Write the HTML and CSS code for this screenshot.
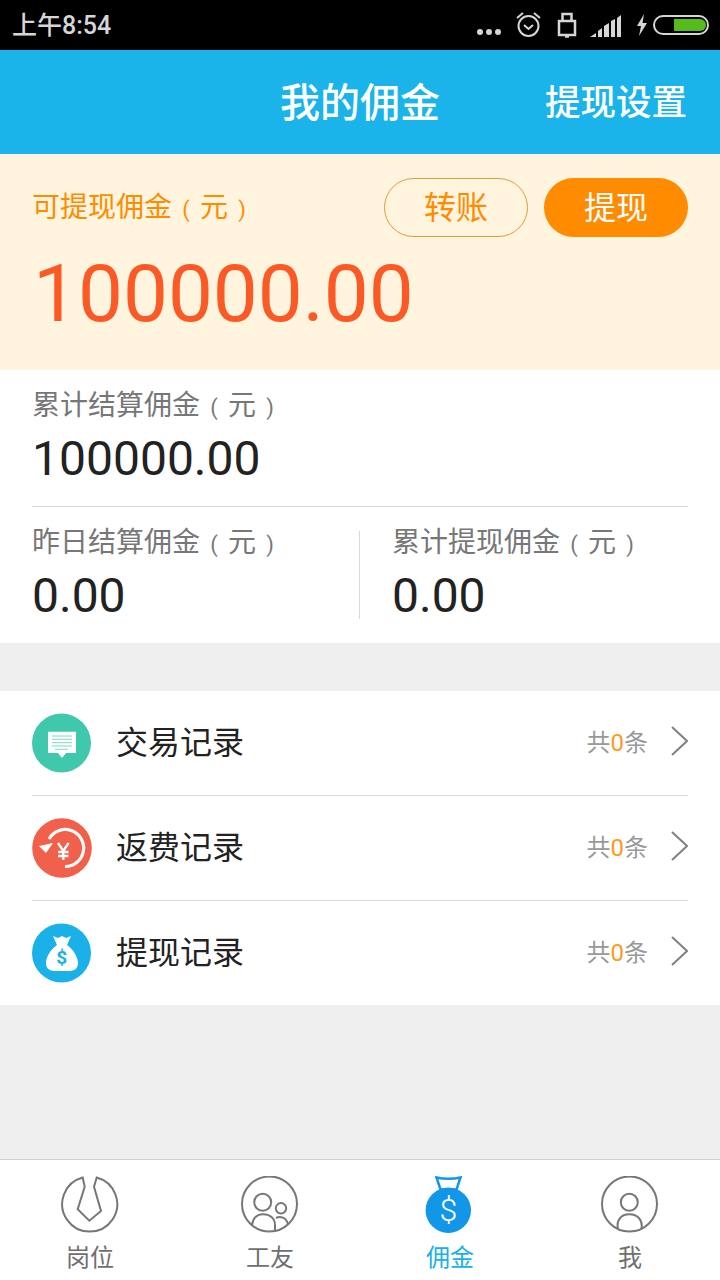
FILE: index.html
```html
<!DOCTYPE html>
<html lang="zh-CN">
<head>
<meta charset="utf-8">
<title>我的佣金</title>
<link rel="stylesheet" href="styles.css">
</head>
<body>
<div class="app">
  <div class="statusbar">
    <span class="clock">上午8:54</span>
    <div class="status-icons">
      <svg width="26" height="8" viewBox="0 0 26 8" class="ic-dots"><circle cx="4" cy="4" r="3"/><circle cx="13" cy="4" r="3"/><circle cx="22" cy="4" r="3"/></svg>
      <svg width="28" height="28" viewBox="0 0 28 28" class="ic-alarm"><circle cx="13.500" cy="15" r="10"/><path d="M9 14l4.500 4 4.500-4M2 7l6-5M25 7l-6-5"/></svg>
      <svg width="20" height="26" viewBox="0 0 20 26" class="ic-lock"><path d="M2 9h16v14H2zM5.500 9V2h9v7M8 24.500h4"/></svg>
      <svg width="32" height="22" viewBox="0 0 32 22" class="ic-signal"><path d="M0 22l6-4v4zM8 16l4-3v9H8zM14 11l5-3v14h-5zM21 6l4-2v18h-4zM27 3l4-3v22h-4z"/></svg>
      <svg width="12" height="22" viewBox="0 0 12 22" class="ic-bolt"><path d="M8 0L1 12h4l-2 10 8-13H6.500z"/></svg>
      <svg width="56" height="20" viewBox="0 0 56 20" class="ic-batt"><rect x="1" y="1" width="54" height="18" rx="9" class="batt-shell"/><path d="M21 4h26a6 6 0 0 1 0 12H21z" class="batt-level"/></svg>
    </div>
  </div>

  <header class="topbar">
    <h1 class="title">我的佣金</h1>
    <span class="action">提现设置</span>
  </header>

  <section class="balance">
    <div class="balance-top">
      <span class="balance-label">可提现佣金<span class="par">(</span>元<span class="par">)</span></span>
      <div class="btns">
        <span class="btn btn-outline">转账</span>
        <span class="btn btn-solid">提现</span>
      </div>
    </div>
    <div class="balance-value">100000.00</div>
  </section>

  <section class="stats">
    <div class="stat-main">
      <div class="stat-label">累计结算佣金<span class="par">(</span>元<span class="par">)</span></div>
      <div class="stat-value">100000.00</div>
    </div>
    <div class="stat-row">
      <div class="stat-col">
        <div class="stat-label">昨日结算佣金<span class="par">(</span>元<span class="par">)</span></div>
        <div class="stat-value">0.00</div>
      </div>
      <div class="stat-col stat-col-right">
        <div class="stat-label">累计提现佣金<span class="par">(</span>元<span class="par">)</span></div>
        <div class="stat-value">0.00</div>
      </div>
    </div>
  </section>

  <section class="records">
    <div class="record">
      <svg class="record-ic" width="60" height="60" viewBox="0 0 60 60"><circle cx="29.500" cy="30" r="29.500" fill="#3fc8ac"/><path d="M16 18.700h28V40H34l-4 5-4-5H16z" fill="#fff"/><path d="M20 23h20M20 26.300h20M20 29.700h20M20 33h20M23 36.300h13" stroke="#7fd9c6" stroke-width="1"/></svg>
      <span class="record-name">交易记录</span>
      <span class="record-count">共<b>0</b>条</span>
      <svg class="chev" width="20" height="32" viewBox="0 0 20 32"><path d="M4 2l15 14L4 30"/></svg>
    </div>
    <div class="record">
      <svg class="record-ic" width="60" height="60" viewBox="0 0 60 60"><circle cx="30" cy="30" r="29.800" fill="#f1604a"/><path d="M33 48.500A18.500 18.500 0 1 0 17 21" fill="none" stroke="#fff" stroke-width="3.200"/><path d="M7 28l14-3-7 10z" fill="#fff"/><path d="M26 25l5.300 8 5.300-8M31.300 33v9M26 34h10.500M26 38h10.500" fill="none" stroke="#fff" stroke-width="2.300"/></svg>
      <span class="record-name">返费记录</span>
      <span class="record-count">共<b>0</b>条</span>
      <svg class="chev" width="20" height="32" viewBox="0 0 20 32"><path d="M4 2l15 14L4 30"/></svg>
    </div>
    <div class="record">
      <svg class="record-ic" width="60" height="60" viewBox="0 0 60 60"><circle cx="29.500" cy="30" r="29.500" fill="#1ab0e8"/><path d="M21 13l5 2 4-2 4 2 5-2-4 9c6 4 11 12 11 18 0 6-4 8-9 8H23c-5 0-9-2-9-8 0-6 5-14 11-18z" fill="#fff"/><text x="29.700" y="41" class="bag-dollar">$</text></svg>
      <span class="record-name">提现记录</span>
      <span class="record-count">共<b>0</b>条</span>
      <svg class="chev" width="20" height="32" viewBox="0 0 20 32"><path d="M4 2l15 14L4 30"/></svg>
    </div>
  </section>

  <div class="filler"></div>

  <nav class="tabbar">
    <div class="tab">
      <svg width="58" height="58" viewBox="0 0 58 58" class="tab-ic"><path d="M21.700 1.500L23.700 10.700 16.700 33.300 28.300 44.700 40 35 33 10.700 35.700 1.500A27.500 27.500 0 1 1 21.700 1.500z"/></svg>
      <span>岗位</span>
    </div>
    <div class="tab">
      <svg width="58" height="58" viewBox="0 0 58 58" class="tab-ic"><circle cx="28.500" cy="28" r="27.500"/><circle cx="21.700" cy="26.300" r="8.500"/><circle cx="40" cy="32.300" r="5.200"/><path d="M11 49c1-7 5-10.700 11.300-10.700S34 42 34 49v6.500M35 42c4-2 10-1 12 6"/></svg>
      <span>工友</span>
    </div>
    <div class="tab tab-active">
      <svg width="58" height="58" viewBox="0 0 58 58" class="tab-money"><path d="M15.500 1.500q12 2.500 24 0l-4 12H19.500z" fill="none" stroke="#1296e8" stroke-width="2.500"/><circle cx="27.300" cy="34.200" r="22.700" fill="#1296e8"/><text x="27.300" y="45" class="tab-dollar">$</text></svg>
      <span>佣金</span>
    </div>
    <div class="tab">
      <svg width="58" height="58" viewBox="0 0 58 58" class="tab-ic"><circle cx="28.500" cy="28" r="27.500"/><circle cx="28.300" cy="26.300" r="8.500"/><path d="M17 53C15 44 20 38.300 28.300 38.300S42 44 40.500 53"/></svg>
      <span>我</span>
    </div>
  </nav>
</div>
</body>
</html>
```

FILE: styles.css
```css
* { box-sizing: border-box; margin: 0; padding: 0; }
html, body { width: 720px; height: 1280px; overflow: hidden; }
body { font-family: Roboto, "Noto Sans CJK SC", sans-serif; background: #efefef; }
.app { width: 720px; height: 1280px; display: flex; flex-direction: column; }

.statusbar { height: 50px; background: #000; display: flex; align-items: center; justify-content: space-between; padding: 0 11px 0 12px; flex: none; }
.clock { color: #d6d6d6; font-size: 25px; font-weight: 500; line-height: 50px; padding-top: 1px; }
.status-icons { display: flex; align-items: center; gap: 14px; }
.ic-dots { fill: #d6d6d6; margin-top: 14px; }
.ic-alarm { fill: none; stroke: #d6d6d6; stroke-width: 2; margin-left: -1px; }
.ic-lock { fill: none; stroke: #d6d6d6; stroke-width: 2.500; }
.ic-signal { fill: #d6d6d6; margin-top: 1px; margin-left: -1px; }
.ic-bolt { fill: #d6d6d6; }
.ic-batt { margin-left: -9px; }
.batt-shell { fill: none; stroke: #d6d6d6; stroke-width: 2; }
.batt-level { fill: #57bb1c; }

.topbar { height: 104px; background: #1ab3ea; position: relative; display: flex; align-items: center; justify-content: center; padding-bottom: 4px; flex: none; }
.title { color: #fff; font-size: 40px; font-weight: 500; }
.action { position: absolute; right: 33px; top: 30px; color: #fff; font-size: 35.500px; line-height: 46px; font-weight: 500; }

.balance { height: 216px; background: #fff5de; padding: 24px 32px 0; flex: none; }
.balance-top { display: flex; justify-content: space-between; align-items: center; }
.balance-label { color: #ff8b00; font-size: 28px; padding-bottom: 6px; }
.par { display: inline-block; width: 28px; text-align: center; font-size: 22px; font-weight: 400; line-height: 20px; }
.btns { display: flex; gap: 16px; }
.btn { width: 144px; height: 59px; border-radius: 30px; display: flex; align-items: center; justify-content: center; font-size: 32px; padding-bottom: 5px; }
.btn-outline { border: 1px solid #e09a40; color: #ff8b00; }
.btn-solid { background: #ff8b00; color: #fff; }
.balance-value { color: #fb5a27; font-size: 80px; line-height: 100px; margin-top: 7px; margin-left: 1px; }

.stats { height: 273px; background: #fff; padding: 0 32px; flex: none; }
.stat-main { height: 137px; border-bottom: 1px solid #d9d9d9; padding-top: 16px; }
.stat-label { color: #777; font-size: 28px; line-height: 40px; }
.stat-value { color: #222; font-size: 48px; line-height: 66px; }
.stat-row { display: flex; padding-top: 16px; }
.stat-col { flex: none; width: 327px; }
.stat-col-right { border-left: 1px solid #d9d9d9; height: 88px; margin-top: 8px; padding-left: 32px; }
.stat-col-right .stat-label { margin-top: -8px; }

.records { margin-top: 48px; height: 314px; background: #fff; padding: 0 32px; flex: none; display: flex; flex-direction: column; }
.record { flex: 1; display: flex; align-items: center; border-bottom: 1px solid #d9d9d9; }
.record:last-child { border-bottom: 0; }
.record-ic { flex: none; }
.bag-dollar { font-size: 19px; font-weight: 700; fill: #1ab0e8; text-anchor: middle; }
.record-name { margin-left: 24px; flex: 1; font-size: 32px; color: #222; padding-bottom: 6px; }
.record-count { font-size: 24px; color: #999; margin-right: 20px; padding-bottom: 6px; }
.record-count b { color: #ff9a1e; font-weight: 400; }
.chev { fill: none; stroke: #808080; stroke-width: 2; flex: none; margin-bottom: 4px; }

.filler { flex: 1; }
.tabbar { height: 121px; background: #fff; border-top: 1px solid #cfcfcf; display: flex; flex: none; }
.tab { flex: 1; display: flex; flex-direction: column; align-items: center; padding-top: 16px; color: #6f6f6f; font-size: 24px; }
.tab span { line-height: 34px; margin-top: 7px; }
.tab-active { color: #1ab0e8; }
.tab-ic { fill: none; stroke: #777; stroke-width: 2; }
.tab-dollar { font-size: 32px; fill: #fff; text-anchor: middle; font-weight: 300; }
```
